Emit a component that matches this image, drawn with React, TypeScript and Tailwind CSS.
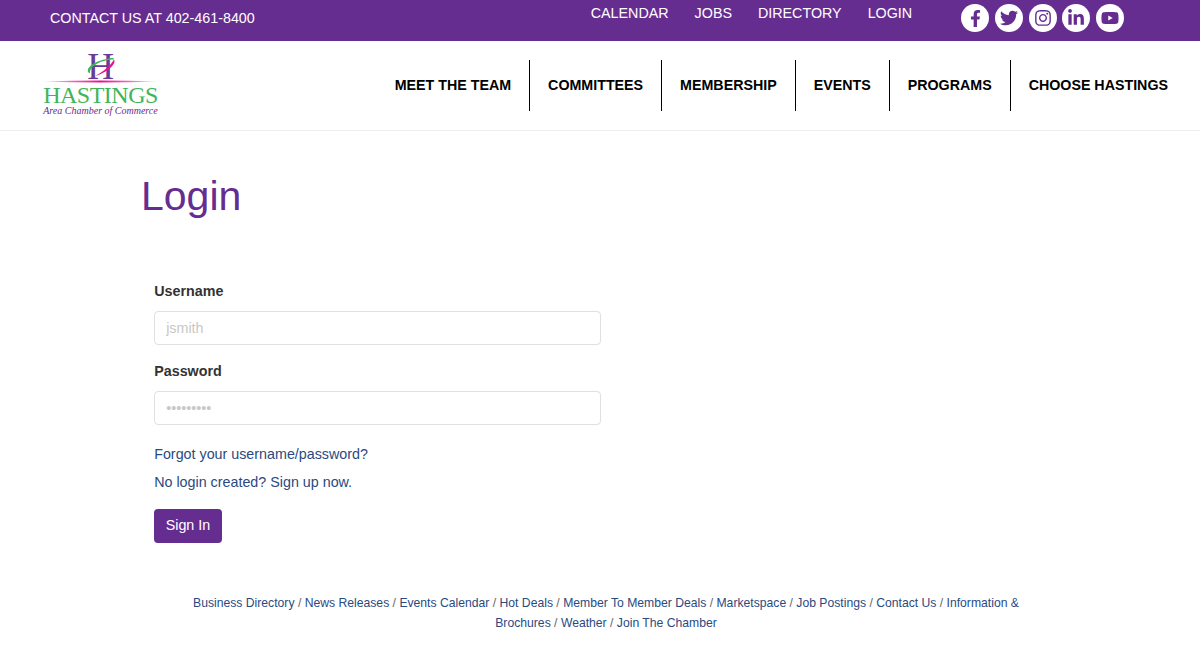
import React from "react";
import { FaFacebookF, FaTwitter, FaInstagram, FaLinkedinIn, FaYoutube } from "react-icons/fa";

const nav = ["MEET THE TEAM", "COMMITTEES", "MEMBERSHIP", "EVENTS", "PROGRAMS", "CHOOSE HASTINGS"];
const top = ["CALENDAR", "JOBS", "DIRECTORY", "LOGIN"];
const icons = [FaFacebookF, FaTwitter, FaInstagram, FaLinkedinIn, FaYoutube];
const foot1 = ["Business Directory", "News Releases", "Events Calendar", "Hot Deals", "Member To Member Deals", "Marketspace", "Job Postings", "Contact Us", "Information & Brochures", "Weather", "Join The Chamber"];

function Logo() {
  return (
    <div className="relative w-[115px] h-[64px] ml-[43px] mt-[12px] shrink-0 font-['Liberation_Serif',serif]">
      <div className="absolute left-0 top-[-5px] w-[115px] flex justify-center text-[#6a3a98] text-[37px] leading-[37px] whitespace-nowrap">H</div>
      <svg className="absolute left-0 top-0" width="115" height="32" viewBox="0 0 115 32">
        <defs>
          <linearGradient id="ln" x1="0" x2="1" y1="0" y2="0">
            <stop offset="0" stopColor="#e5138f" stopOpacity="0.25" />
            <stop offset="0.5" stopColor="#e5138f" />
            <stop offset="1" stopColor="#e5138f" stopOpacity="0.25" />
          </linearGradient>
        </defs>
        <path d="M0 28.4 Q57 26.6 115 28.4 Q57 30.4 0 28.4 Z" fill="url(#ln)" />
        <path d="M45.5 19.5 C42 14 54 7 67 5.2 C70 4.8 71 5.4 71 6.4 C60 6.4 48 12 47 18.5 C47 20 47 21 45.5 19.5 Z" fill="#3fb55b" />
        <path d="M71 6.4 C73.5 10 67 18 52 23.2 C61 18 68 12 71 6.4 Z" fill="#e5138f" />
      </svg>
      <div className="absolute left-0 top-[30px] w-[115px] flex justify-center text-[#3fb55b] text-[24px] leading-[24px] whitespace-nowrap tracking-[-0.5px]">HASTINGS</div>
      <div className="absolute left-0 top-[52px] w-[115px] flex justify-center text-[#662d91] text-[10px] leading-[12px] italic whitespace-nowrap">Area Chamber of Commerce</div>
    </div>
  );
}

export default function App() {
  return (
    <div className="w-[1200px] h-[659px] overflow-hidden bg-white font-['Liberation_Sans',sans-serif] text-[#333]">
      <div className="h-[41px] bg-[#662d91] flex text-white">
        <div className="ml-[50px] mt-[9px] text-[14.3px] leading-[18px] whitespace-nowrap">CONTACT US AT 402-461-8400</div>
        <div className="ml-[336px] mt-[4px] flex gap-[26px] text-[14.3px] leading-[18px] h-[18px]">
          {top.map((t) => <a key={t} className="whitespace-nowrap">{t}</a>)}
        </div>
        <div className="ml-[49px] mt-[4px] flex gap-[5.75px] h-[28px]">
          {icons.map((I, i) => (
            <span key={i} className="w-[28px] h-[28px] rounded-full bg-white flex items-center justify-center text-[#662d91]">
              <I size={i === 0 ? 17 : 18} />
            </span>
          ))}
        </div>
      </div>
      <div className="h-[90px] border-b border-[#eeeeee] flex">
        <Logo />
        <div className="ml-auto mt-[19px] mr-[14px] flex h-[51px] items-center">
          {nav.map((n, i) => (
            <div key={n} className={"h-[51px] flex items-center px-[18px] text-[14.25px] font-bold text-black whitespace-nowrap " + (i < nav.length - 1 ? "border-r border-black" : "")}>{n}</div>
          ))}
        </div>
      </div>
      <div className="pl-[141px]">
        <h1 className="mt-[41px] text-[41px] leading-[48px] text-[#662d91] font-normal">Login</h1>
        <div className="ml-[13.2px] mt-[61px] w-[447px] text-[14.3px]">
          <label className="block font-bold leading-[20px] text-[#333]">Username</label>
          <input readOnly placeholder="jsmith" className="mt-[10px] block w-full h-[34px] border border-[#e0e0e0] rounded-[4px] px-[11px] text-[14.3px] placeholder:text-[#c8c8c8] outline-none" />
          <label className="block mt-[16px] font-bold leading-[20px] text-[#333]">Password</label>
          <input readOnly placeholder="•••••••••" className="mt-[10px] block w-full h-[34px] border border-[#e0e0e0] rounded-[4px] px-[11px] text-[14.3px] placeholder:text-[#c8c8c8] outline-none" />
          <a className="block mt-[19px] leading-[20px] text-[#2a4a7f]">Forgot your username/password?</a>
          <a className="block mt-[8px] leading-[20px] text-[#2a4a7f]">No login created? Sign up now.</a>
          <button className="block mt-[17px] w-[67.5px] h-[34px] rounded-[4px] bg-[#662d91] text-white text-[14.3px]">Sign In</button>
        </div>
      </div>
      <div className="mt-[50px] ml-[186px] w-[840px] text-center text-[12.18px] leading-[20px] text-[#666]">
        {foot1.map((f, i) => (
          <React.Fragment key={f}>
            <a className="text-[#2a4a7f]">{f}</a>{i < foot1.length - 1 ? " / " : ""}
          </React.Fragment>
        ))}
      </div>
    </div>
  );
}
